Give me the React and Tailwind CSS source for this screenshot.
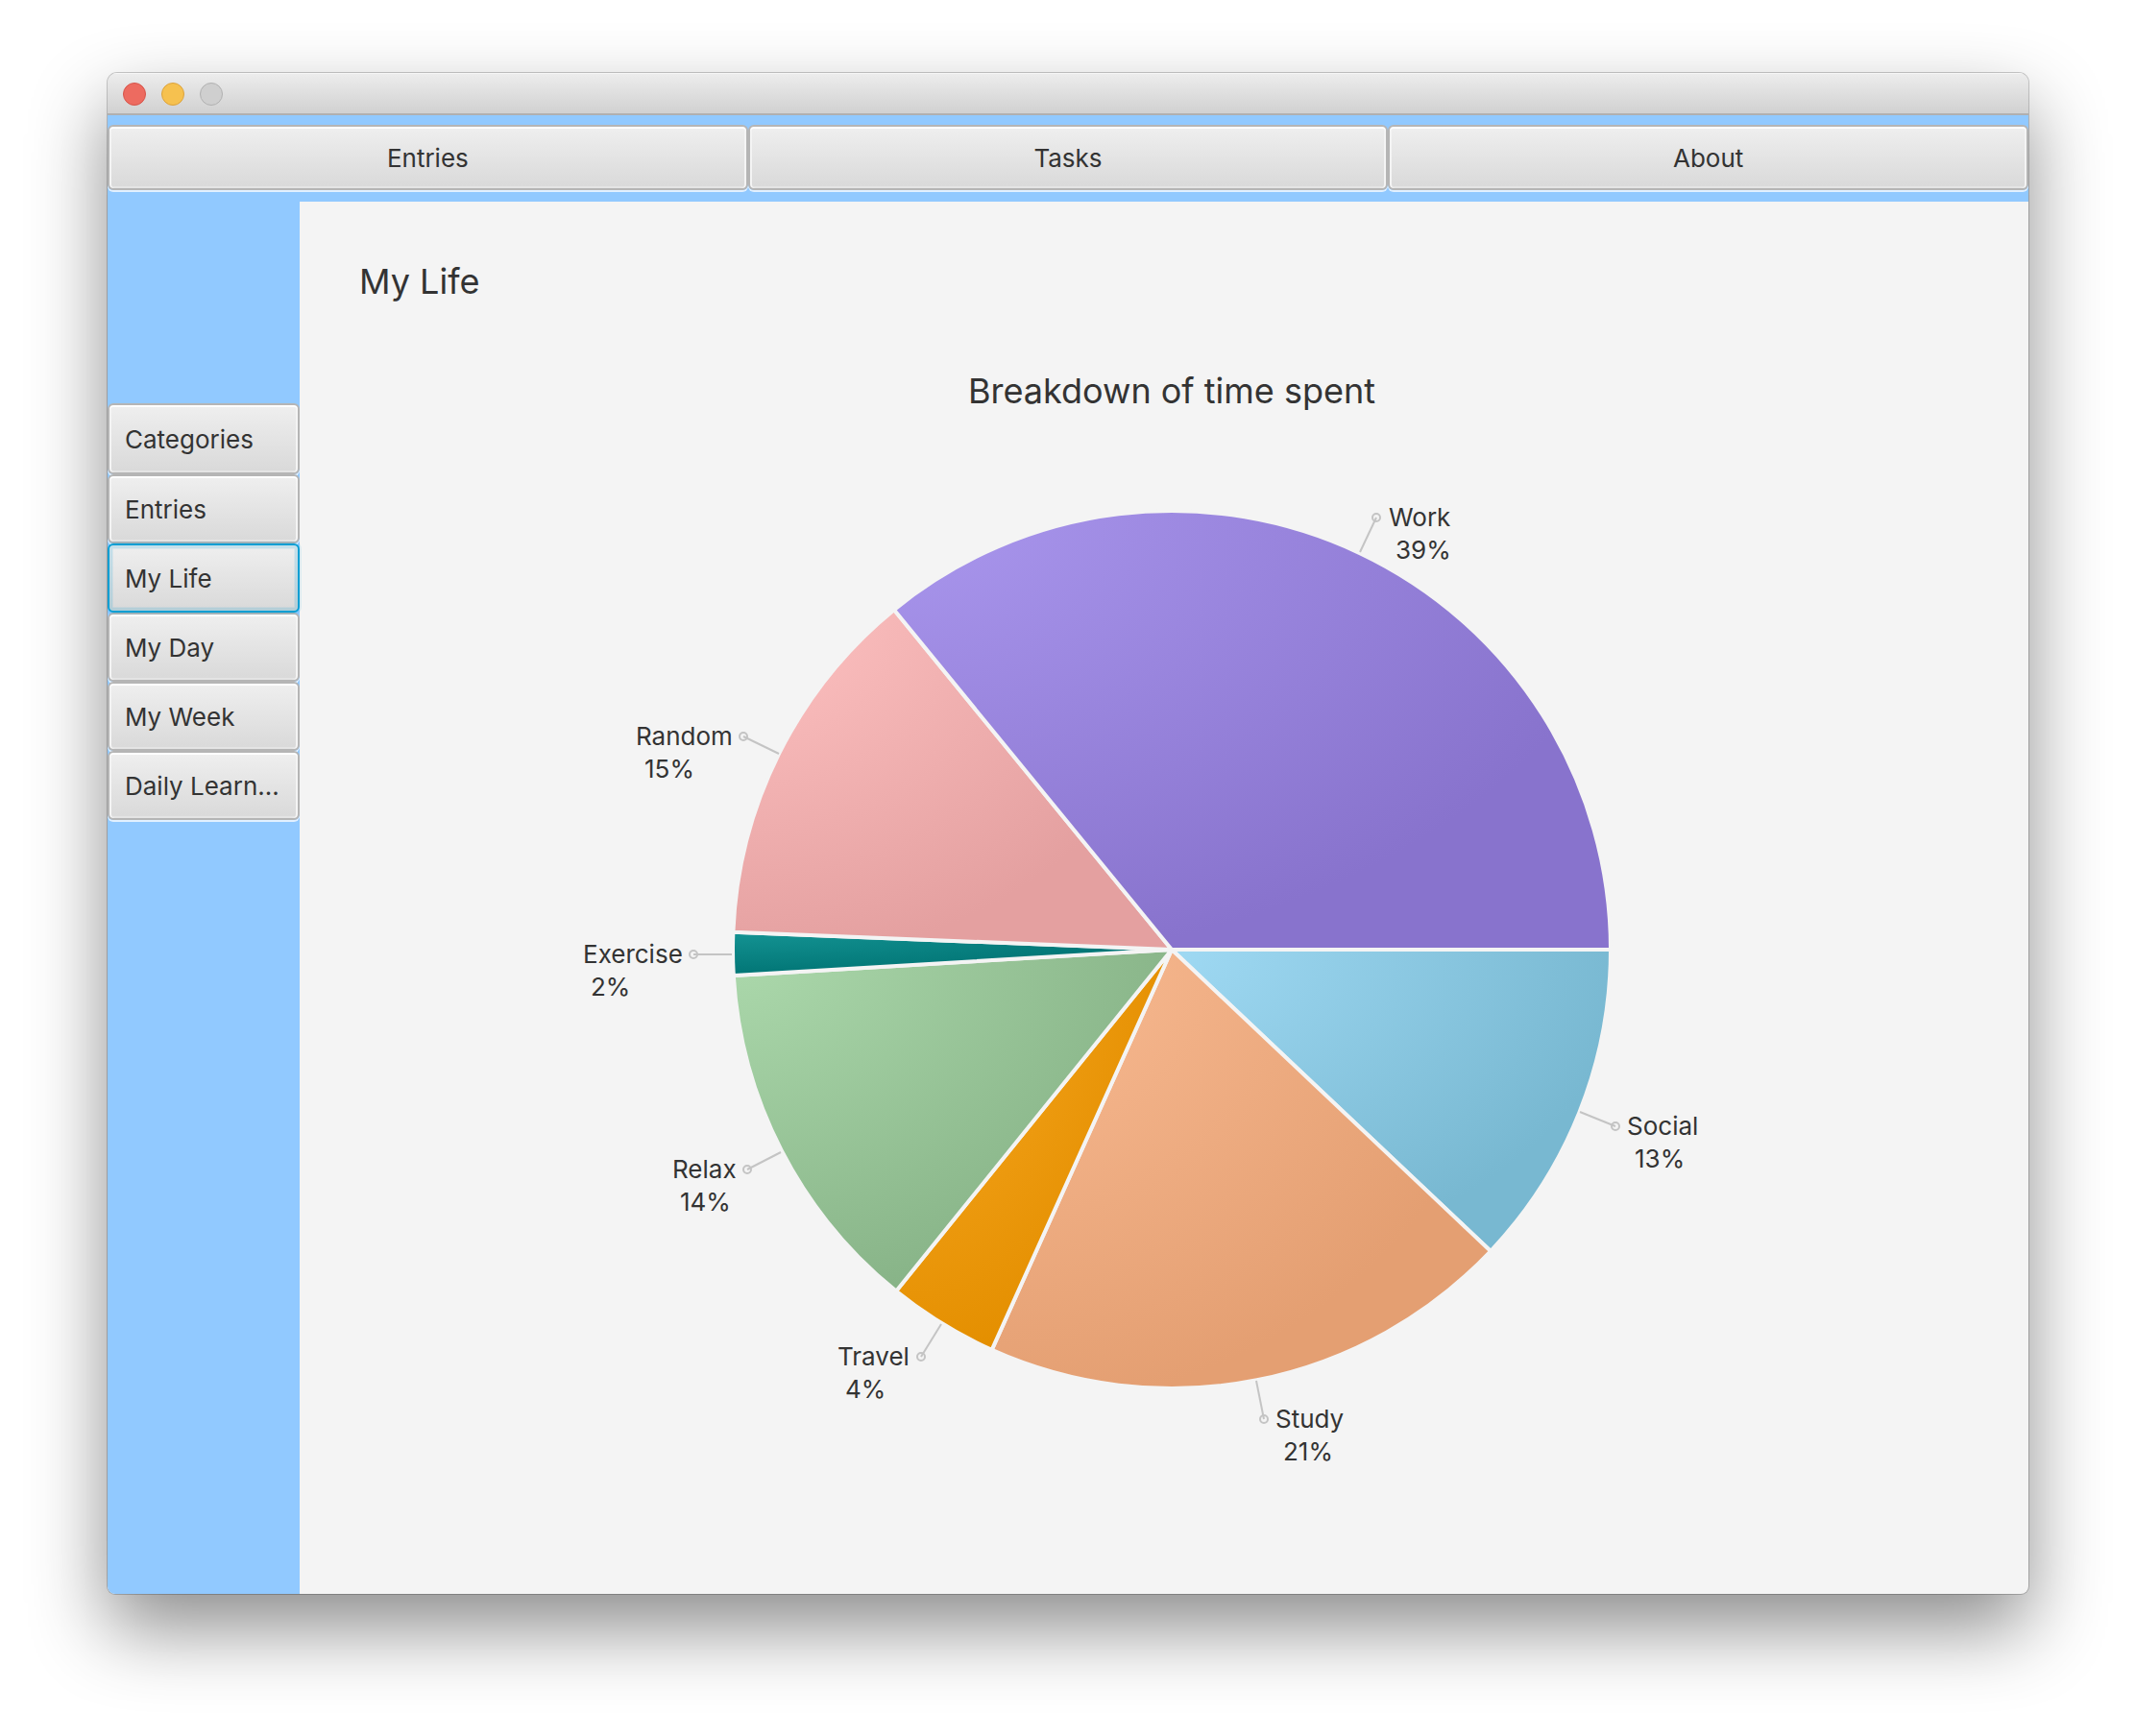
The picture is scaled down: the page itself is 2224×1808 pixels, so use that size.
import React from "react";

const CX = 608;
const CY = 450;
const R = 457;

const slices = [
  { name: "Social", pct: "13%", from: 0, to: 43.4, light: "#9fd9f3", dark: "#78b8d1", dot: [1070, 634], start: [1033, 619], text: [1082, 642], pctX: 1090 },
  { name: "Study", pct: "21%", from: 43.4, to: 114.2, light: "#fabc94", dark: "#e49f72", dot: [704, 939], start: [696, 899], text: [716, 947], pctX: 724 },
  { name: "Travel", pct: "4%", from: 114.2, to: 128.9, light: "#fbac28", dark: "#e48f00", dot: [347, 874], start: [368, 840], text: [260, 882], pctX: 268 },
  { name: "Relax", pct: "14%", from: 128.9, to: 176.6, light: "#acd9ac", dark: "#88b488", dot: [166, 679], start: [201, 661], text: [88, 687], pctX: 96 },
  { name: "Exercise", pct: "2%", from: 176.6, to: 182.3, light: "#149393", dark: "#007373", dot: [110, 455], start: [150, 455], text: [-5, 463], pctX: 3 },
  { name: "Random", pct: "15%", from: 182.3, to: 230.75, light: "#ffc3c3", dark: "#e4a0a0", dot: [162, 228], start: [199, 246], text: [50, 236], pctX: 59 },
  { name: "Work", pct: "39%", from: 230.75, to: 360, light: "#aa97ee", dark: "#8873cd", dot: [821, 0], start: [804, 36], text: [834, 8], pctX: 841 },
];

function wedge(from, to) {
  const p = (deg) => {
    const a = (deg * Math.PI) / 180;
    return `${(CX + R * Math.cos(a)).toFixed(2)} ${(CY + R * Math.sin(a)).toFixed(2)}`;
  };
  return `M${CX} ${CY}L${p(from)}A${R} ${R} 0 0 1 ${p(to)}Z`;
}

function PieChart() {
  return (
    <svg viewBox="-8 -20 1232 1020" className="h-[1020px] w-[1232px] max-w-full" role="img" aria-label="Breakdown of time spent">
      <defs>
        {slices.map((s) => (
          <radialGradient key={s.name} id={`fill-${s.name}`} cx="0" cy="0" r="1.05">
            <stop offset="0" stopColor={s.light} />
            <stop offset="1" stopColor={s.dark} />
          </radialGradient>
        ))}
      </defs>
      {slices.map((s) => (
        <path key={s.name} d={wedge(s.from, s.to)} fill={`url(#fill-${s.name})`} stroke="#f4f4f4" strokeWidth="4" strokeLinejoin="bevel" />
      ))}
      {slices.map((s) => (
        <g key={s.name}>
          <path d={`M${s.start[0]} ${s.start[1]}L${s.dot[0]} ${s.dot[1]}`} stroke="#c4c4c4" strokeWidth="2" />
          <circle cx={s.dot[0]} cy={s.dot[1]} r="4" fill="none" stroke="#c4c4c4" strokeWidth="2" />
          <text x={s.text[0]} y={s.text[1] + 1} fontSize="26" fill="#333333">{s.name}</text>
          <text x={s.pctX} y={s.text[1] + 35} fontSize="26" fill="#333333">{s.pct}</text>
        </g>
      ))}
    </svg>
  );
}

const face =
  "rounded-md border-2 border-[#b5b5b5] bg-linear-to-b from-[#efefef] to-[#d9d9d9] pt-0.5 text-[26px] leading-8 text-[#333333]";
const raised = "shadow-[inset_0_2px_0_#ffffff,inset_2px_0_0_#f4f4f4,inset_-2px_0_0_#f4f4f4,inset_0_-2px_0_#e4e4e4,0_2px_0_#e2f0ff]";
const focused =
  "rounded-md border-2 border-[#039ed3] bg-linear-to-b from-[#efefef] to-[#d9d9d9] pt-0.5 text-[26px] leading-8 text-[#333333] shadow-[inset_0_0_0_3px_rgba(3,158,211,0.1),inset_0_0_0_4px_rgba(3,158,211,0.08),0_0_0_2px_rgba(3,158,211,0.1)]";

const sections = ["Categories", "Entries", "My Life", "My Day", "My Week", "Daily Learn..."];

export default function App() {
  return (
    <div className="min-h-screen bg-white px-28 pt-[76px] pb-[148px] font-['Inter',sans-serif] text-[#333333]">
      <div className="flex min-h-[1584px] flex-col overflow-hidden rounded-t-[10px] rounded-b-lg bg-[#f4f4f4] shadow-[0_0_0_1px_rgba(0,0,0,0.2),0_36px_80px_rgba(0,0,0,0.45)]">
        <header className="flex h-11 items-center gap-4 border-b-2 border-[#b0b0b0] bg-linear-to-b from-[#ededed] to-[#d1d1d1] px-4 pt-0.5 shadow-[inset_0_1px_0_#f6f6f6]">
          <button type="button" aria-label="Close" className="size-6 rounded-full border border-[#d6544a] bg-[#ed6b60]" />
          <button type="button" aria-label="Minimize" className="size-6 rounded-full border border-[#dba23c] bg-[#f6c14f]" />
          <button type="button" aria-label="Zoom" className="size-6 rounded-full border border-[#b1b1b1] bg-[#cfcfcf]" />
        </header>
        <nav className="grid h-[90px] grid-cols-3 bg-[#91c9ff] pt-2.5 pb-3">
          {["Entries", "Tasks", "About"].map((label) => (
            <button key={label} type="button" className={`${face} ${raised}`}>{label}</button>
          ))}
        </nav>
        <div className="flex grow">
          <aside className="flex w-[200px] shrink-0 flex-col bg-[#91c9ff] pt-[210px]">
            {sections.map((label) => (
              <button
                key={label}
                type="button"
                className={`h-[72px] w-full shrink-0 px-4 text-left whitespace-nowrap first:h-[74px] ${label === "My Life" ? `relative ${focused}` : `${face} ${raised}`}`}
              >
                {label}
              </button>
            ))}
          </aside>
          <main className="flex grow flex-col pt-[59px]">
            <h1 className="pl-[62px] text-[36px] leading-[48px]">My Life</h1>
            <section className="mt-[66px] flex flex-col items-center pl-4">
              <h2 className="text-[36px] leading-[48px]">Breakdown of time spent</h2>
              <div className="mt-[88px]">
                <PieChart />
              </div>
            </section>
          </main>
        </div>
      </div>
    </div>
  );
}
